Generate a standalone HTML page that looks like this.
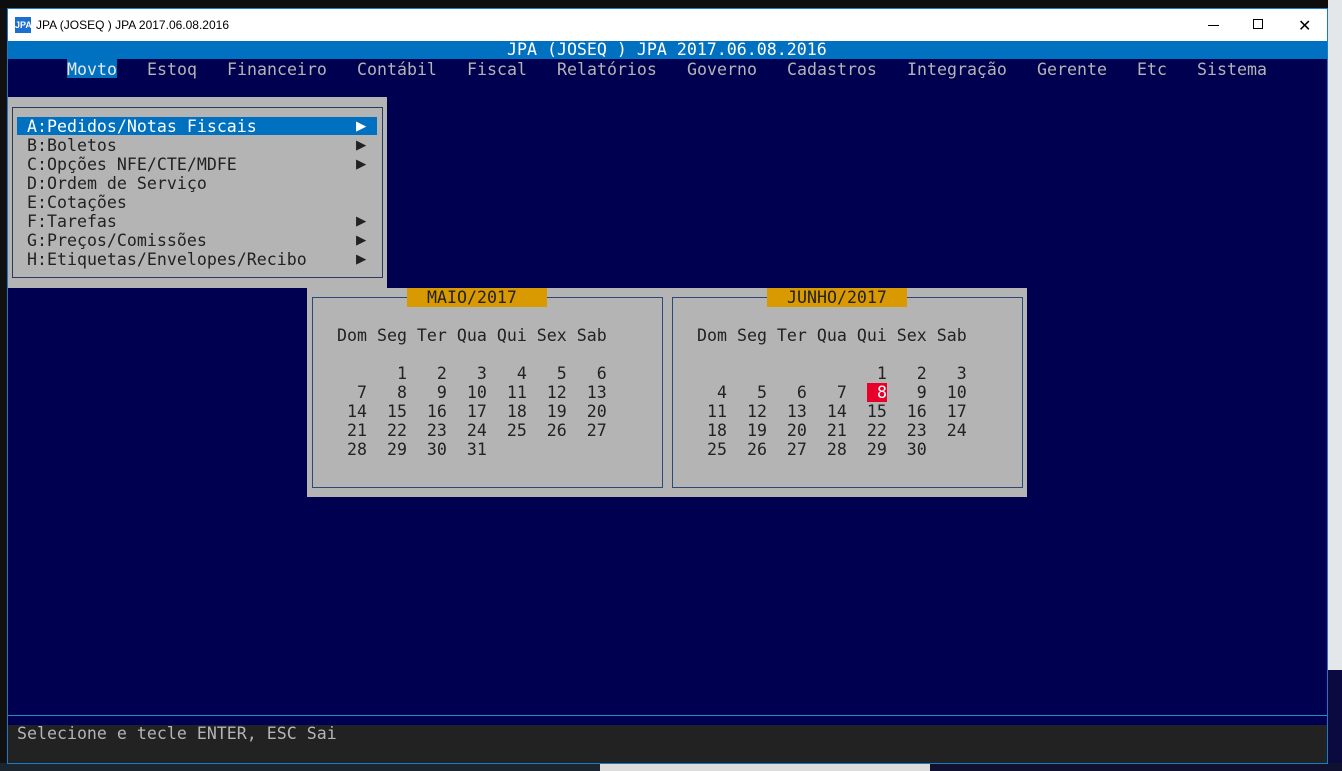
<!DOCTYPE html>
<html><head><meta charset="utf-8"><style>
*{margin:0;padding:0;box-sizing:border-box}
body{width:1342px;height:771px;overflow:hidden;position:relative;background:#111;font-family:"DejaVu Sans Mono","Liberation Mono",monospace}
.a{position:absolute}
.t{position:absolute;font-size:16.6px;line-height:19px;white-space:pre;font-family:"DejaVu Sans Mono","Liberation Mono",monospace}
</style></head><body>
<div class="a" style="left:0;top:0;width:1342px;height:8px;background:#0d0d0d"></div>
<div class="a" style="left:1328px;top:0;width:14px;height:771px;background:#e4e7ea"></div>
<div class="a" style="left:1328px;top:670px;width:14px;height:101px;background:#0a0a40"></div>
<div class="a" style="left:0;top:763px;width:1342px;height:8px;background:#dcdcdc"></div>
<div class="a" style="left:0;top:763px;width:600px;height:8px;background:#1a2530"></div>
<div class="a" style="left:930px;top:763px;width:412px;height:8px;background:#101030"></div>
<!-- window -->
<div class="a" style="left:7px;top:8px;width:1321px;height:756px;background:#000050;border:1px solid #1a7ac8"></div>
<div class="a" style="left:8px;top:9px;width:1319px;height:32px;background:#fff"></div>
<div class="a" style="left:15px;top:17px;width:16px;height:16px;background:#1a6fd0;color:#fff;font:bold 9px 'Liberation Sans',sans-serif;line-height:16px;text-align:center">JPA</div>
<div class="a" style="left:36px;top:17px;font:12px 'Liberation Sans',sans-serif;color:#000;line-height:16px">JPA (JOSEQ ) JPA 2017.06.08.2016</div>
<div class="a" style="left:1208px;top:25px;width:11px;height:1px;background:#000"></div>
<div class="a" style="left:1253px;top:19px;width:10px;height:10px;border:1px solid #000"></div>
<div class="a" style="left:1298px;top:16px;font:16px 'Liberation Sans',sans-serif;color:#000">✕</div>
<div class="a" style="left:8px;top:41px;width:1319px;height:18px;background:#0070c0"></div>
<div class="t" style="left:507px;top:40px;color:#fff">JPA (JOSEQ ) JPA 2017.06.08.2016</div>
<!-- menu bar -->
<div class="a" style="left:67px;top:59px;width:50px;height:19px;background:#0070c0"></div>
<div class="t" style="left:67px;top:60px;color:#e8e8e8">Movto</div>
<div class="t" style="left:147px;top:60px;color:#b4b4b4">Estoq</div>
<div class="t" style="left:227px;top:60px;color:#b4b4b4">Financeiro</div>
<div class="t" style="left:357px;top:60px;color:#b4b4b4">Contábil</div>
<div class="t" style="left:467px;top:60px;color:#b4b4b4">Fiscal</div>
<div class="t" style="left:557px;top:60px;color:#b4b4b4">Relatórios</div>
<div class="t" style="left:687px;top:60px;color:#b4b4b4">Governo</div>
<div class="t" style="left:787px;top:60px;color:#b4b4b4">Cadastros</div>
<div class="t" style="left:907px;top:60px;color:#b4b4b4">Integração</div>
<div class="t" style="left:1037px;top:60px;color:#b4b4b4">Gerente</div>
<div class="t" style="left:1137px;top:60px;color:#b4b4b4">Etc</div>
<div class="t" style="left:1197px;top:60px;color:#b4b4b4">Sistema</div>
<!-- dropdown -->
<div class="a" style="left:8px;top:97px;width:379px;height:191px;background:#b4b4b4"></div>
<div class="a" style="left:12px;top:107px;width:371px;height:171px;border:1px solid #2a3a5a"></div>
<div class="a" style="left:17px;top:117px;width:360px;height:18px;background:#0070c0"></div>
<div class="t" style="left:27px;top:117px;color:#fff">A:Pedidos/Notas Fiscais</div>
<div class="t" style="left:27px;top:136px;color:#222">B:Boletos
C:Opções NFE/CTE/MDFE
D:Ordem de Serviço
E:Cotações
F:Tarefas
G:Preços/Comissões
H:Etiquetas/Envelopes/Recibo</div>
<div class="t" style="left:356px;top:117px;color:#fff;font-size:17px">▶</div>
<div class="t" style="left:356px;top:136px;color:#222;font-size:17px">▶
▶


▶
▶
▶</div>
<!-- calendars -->
<div class="a" style="left:307px;top:288px;width:720px;height:209px;background:#b4b4b4"></div>
<div class="a" style="left:312px;top:297px;width:351px;height:191px;border:1px solid #2a4a7a"></div>
<div class="a" style="left:672px;top:297px;width:351px;height:191px;border:1px solid #2a4a7a"></div>
<div class="a" style="left:407px;top:288px;width:140px;height:19px;background:#d89a00"></div>
<div class="a" style="left:767px;top:288px;width:140px;height:19px;background:#d89a00"></div>
<div class="t" style="left:427px;top:288px;color:#222">MAIO/2017</div>
<div class="t" style="left:787px;top:288px;color:#222">JUNHO/2017</div>
<div class="t" style="left:337px;top:326px;color:#222">Dom Seg Ter Qua Qui Sex Sab

      1   2   3   4   5   6
  7   8   9  10  11  12  13
 14  15  16  17  18  19  20
 21  22  23  24  25  26  27
 28  29  30  31</div>
<div class="a" style="left:867px;top:383px;width:20px;height:19px;background:#e8002a"></div>
<div class="t" style="left:697px;top:326px;color:#222">Dom Seg Ter Qua Qui Sex Sab

                  1   2   3
  4   5   6   7       9  10
 11  12  13  14  15  16  17
 18  19  20  21  22  23  24
 25  26  27  28  29  30</div>
<div class="t" style="left:877px;top:383px;color:#fff">8</div>
<!-- status -->
<div class="a" style="left:8px;top:715px;width:1319px;height:1px;background:#2a8ac0"></div>
<div class="a" style="left:8px;top:725px;width:1319px;height:38px;background:#222"></div>
<div class="t" style="left:17px;top:724px;color:#b4b4b4">Selecione e tecle ENTER, ESC Sai</div>
</body></html>
